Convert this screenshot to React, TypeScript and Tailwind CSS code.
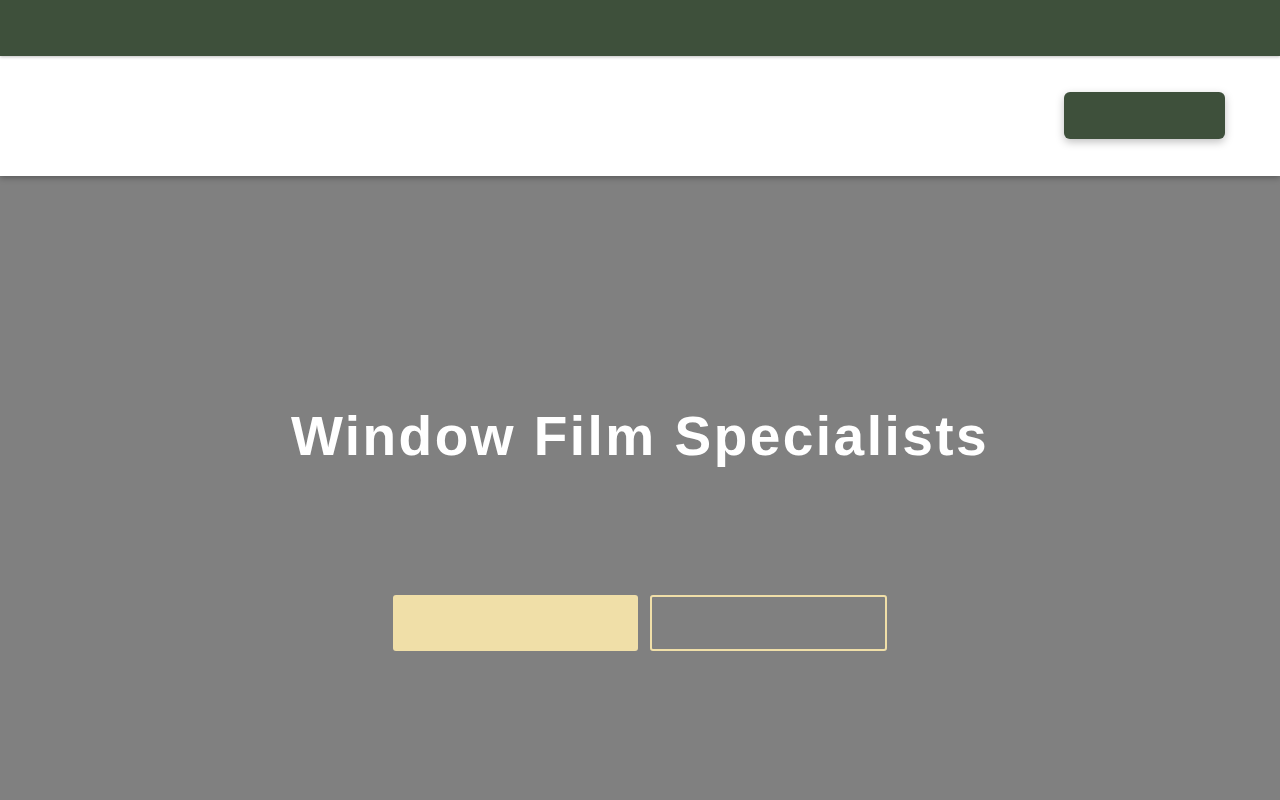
export default function App() {
  return (
    <div className="min-h-screen bg-[#808080]" style={{ fontFamily: '"Liberation Sans", Arial, sans-serif' }}>
      {/* Top bar */}
      <div className="relative z-20 h-14 bg-[#3e503b] shadow-[0_1px_3px_rgba(0,0,0,0.25)]" />

      {/* Header */}
      <header className="relative z-10 h-[120px] bg-white shadow-[0_2px_6px_rgba(0,0,0,0.3)]">
        <div className="flex h-full items-start justify-end pr-[55px] pt-9">
          <button className="h-[47px] w-[161px] rounded-md bg-[#3e503b] shadow-[0_3px_8px_rgba(0,0,0,0.25)]" />
        </div>
      </header>

      {/* Hero */}
      <section className="flex h-[624px] flex-col items-center bg-[#808080] pt-[233px]">
        <h1 className="text-[55px] font-bold leading-none tracking-[0.045em] text-white">
          Window Film Specialists
        </h1>
        <div className="mt-[131px] flex gap-3">
          <button className="h-[56px] w-[245px] rounded-[3px] bg-[#f0dfa8]" />
          <button className="h-[56px] w-[237px] rounded-[3px] border-2 border-[#f0dfa8]" />
        </div>
      </section>
    </div>
  );
}
